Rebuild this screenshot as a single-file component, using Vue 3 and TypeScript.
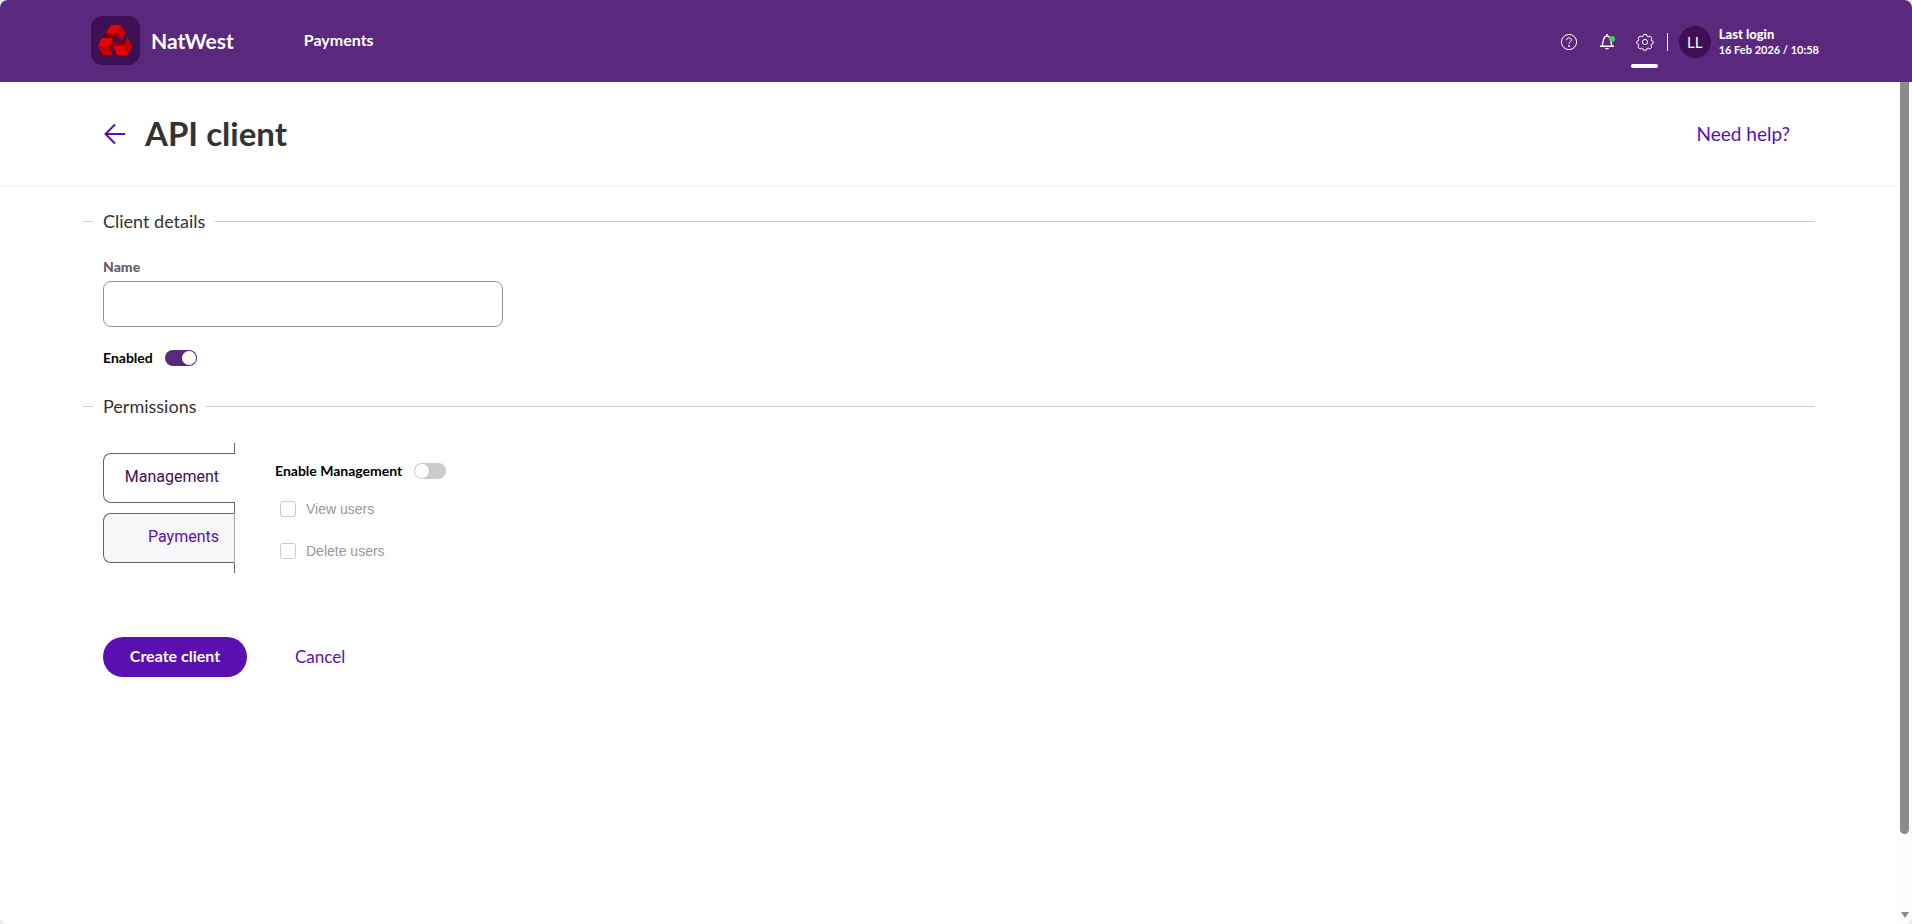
<script setup lang="ts">
import { ref } from 'vue'

interface Permission {
  id: string
  label: string
  checked: boolean
}

const name = ref('')
const enabled = ref(true)
const managementEnabled = ref(false)
const tabs = ['Management', 'Payments']
const activeTab = ref('Management')
const permissions = ref<Permission[]>([
  { id: 'view-users', label: 'View users', checked: false },
  { id: 'delete-users', label: 'Delete users', checked: false },
])
</script>

<template>
  <div class="page">
    <header class="topbar">
      <a class="brand" href="#">
        <svg class="brand-mark" viewBox="0 0 49 49" aria-hidden="true">
          <rect width="49" height="49" rx="12" fill="#3c1053" />
          <path fill="#990000" d="M15 17h11l2 4H17z" />
          <path fill="#ed0000" d="M20 9h10l-4 8H15z" />
          <path fill="#c40000" d="M30 9l5 8-4.500 8.500L26 17z" />
          <path fill="#990000" d="M21.500 22l2.300 4-4.300 7.500-2-3.500z" />
          <path fill="#ed0000" d="M11 22h10.500l-4 8H7z" />
          <path fill="#c40000" d="M7 30h10.500l4.500 9H11.500z" />
          <path fill="#990000" d="M36.500 22l-4 8H22l2-3.500h9.500z" />
          <path fill="#c40000" d="M36.500 22l5 8-5 9-4-9z" />
          <path fill="#ed0000" d="M22 30h10.500l4 9h-10z" />
        </svg>
        <span>NatWest</span>
      </a>
      <nav class="nav"><a href="#">Payments</a></nav>
      <div class="tools">
        <button class="tool" type="button" aria-label="Help">
          <svg viewBox="0 0 18 18" aria-hidden="true">
            <circle cx="9" cy="9" r="7.600" />
            <path d="M6.600 7.200C6.600 5.600 7.600 4.800 9 4.800s2.500.9 2.500 2.200c0 1.800-2.500 1.900-2.500 3.800" />
            <circle class="solid" cx="9" cy="13" r=".9" />
          </svg>
        </button>
        <button class="tool" type="button" aria-label="Notifications">
          <svg viewBox="0 0 18 18" aria-hidden="true">
            <path class="bold" d="M9 1v2M2 13.300h14M4 13C5.400 11 4.200 3 9 3s3.600 8 5 10" />
            <path class="solid" d="M7 15h4c-.3 1.900-3.700 1.900-4 0z" />
            <circle class="dot" cx="14" cy="6" r="3" />
          </svg>
        </button>
        <button class="tool current" type="button" aria-label="Settings">
          <svg viewBox="0 0 18 18" aria-hidden="true">
            <circle cx="9" cy="9" r="2.600" />
            <path d="M7.500 1.500h3l.6 1.900 1.200.5 1.800-.9L16 5.100l-.8 1.700.4 1 1.500.4v2.300l-1.600.6-.5 1.200.9 1.700-2 2-1.700-.9-1.200.5-.6 1.600h-3l-.6-1.600-1.100-.5-1.800.9-2-2 .9-1.700-.5-1.200-1.400-.6V8.200l1.500-.4.4-1L2.100 5.100 4 3l1.800.9 1.100-.5z" />
          </svg>
        </button>
        <span class="divider"></span>
        <span class="avatar">LL</span>
        <p class="login"><strong>Last login</strong><span>16 Feb 2026 / 10:58</span></p>
      </div>
    </header>

    <div class="viewport">
      <main class="content">
        <div class="heading">
          <a class="back" href="#" aria-label="Back">
            <svg viewBox="0 0 22 22" aria-hidden="true"><path d="M21 11H2M11 1.500L1.500 11l9.500 9.500" /></svg>
          </a>
          <h1>API client</h1>
          <a class="help" href="#">Need help?</a>
        </div>

        <form @submit.prevent>
          <fieldset class="details">
            <legend>Client details</legend>
            <label class="name-label" for="client-name">Name</label>
            <input id="client-name" v-model="name" class="name-input" type="text" />
            <div class="switch-row">
              <label for="enabled">Enabled</label>
              <input id="enabled" v-model="enabled" class="switch" type="checkbox" role="switch" />
            </div>
          </fieldset>

          <fieldset class="permissions">
            <legend>Permissions</legend>
            <div class="panels">
              <div class="tabs" role="tablist">
                <button
                  v-for="tab in tabs"
                  :key="tab"
                  class="tab"
                  :class="{ active: tab === activeTab }"
                  type="button"
                  role="tab"
                  :aria-selected="tab === activeTab"
                  @click="activeTab = tab"
                >{{ tab }}</button>
              </div>
              <div class="panel" role="tabpanel">
                <div class="switch-row">
                  <label for="management">Enable Management</label>
                  <input id="management" v-model="managementEnabled" class="switch" type="checkbox" role="switch" />
                </div>
                <div v-for="item in permissions" :key="item.id" class="check-row">
                  <input :id="item.id" v-model="item.checked" type="checkbox" :disabled="!managementEnabled" />
                  <label :for="item.id">{{ item.label }}</label>
                </div>
              </div>
            </div>
          </fieldset>

          <div class="actions">
            <button class="primary" type="submit">Create client</button>
            <a class="cancel" href="#">Cancel</a>
          </div>
        </form>
      </main>
      <div class="rail" aria-hidden="true">
        <span class="thumb"></span>
        <svg viewBox="0 0 8 6"><path d="M0 0h8L4 6z" /></svg>
      </div>
    </div>
  </div>
</template>

<style>
body {
  margin: 0;
  background: #ececec;
}
</style>

<style scoped>
.page {
  display: flex;
  flex-direction: column;
  min-height: 100vh;
  overflow: hidden;
  border-radius: 8px;
  background: #fff;
  color: #333;
  font-family: Lato, "Liberation Sans", sans-serif;
  font-size: 16px;
}
.page *,
.page *::before {
  box-sizing: border-box;
}
a {
  color: #5a10b0;
  text-decoration: none;
}
button {
  border: 0;
  background: none;
  cursor: pointer;
}
.topbar {
  display: flex;
  align-items: center;
  height: 82px;
  padding: 0 93px 1px 91px;
  background: #5a287d;
  color: #fff;
}
.topbar a {
  color: #fff;
}
.brand {
  display: flex;
  align-items: center;
  gap: 11px;
  font-size: 21px;
  font-weight: 700;
}
.brand-mark {
  width: 49px;
  height: 49px;
}
.nav {
  margin-left: 70px;
  padding-bottom: 2px;
  font-weight: 700;
}
.tools {
  display: flex;
  align-items: center;
  margin-left: auto;
  padding-top: 3px;
}
.tool {
  position: relative;
  display: flex;
  align-items: center;
  justify-content: center;
  width: 28px;
  height: 52px;
  margin-right: 10px;
  padding: 0;
}
.tool.current {
  margin-right: 8px;
}
.tool.current::after {
  content: "";
  position: absolute;
  bottom: 0;
  left: 0;
  width: 27px;
  height: 4px;
  border-radius: 2px;
  background: #fff;
}
.tool svg {
  width: 18px;
  height: 18px;
  fill: none;
  stroke: #fff;
  stroke-width: 1;
}
.tool .bold {
  stroke-width: 1.500;
}
.tool .solid {
  fill: #fff;
  stroke: none;
}
.tool .dot {
  fill: #3bd44f;
  stroke: none;
}
.divider {
  width: 1px;
  height: 18px;
  background: #fff;
}
.avatar {
  display: flex;
  align-items: center;
  justify-content: center;
  width: 32px;
  height: 32px;
  margin: 0 8px 0 11px;
  border-radius: 50%;
  background: #3c1053;
  font-size: 15px;
}
.login {
  display: flex;
  flex-direction: column;
  margin: 0;
  font-size: 11px;
  font-weight: 700;
  line-height: 15px;
}
.login strong {
  font-size: 13px;
}
.viewport {
  display: flex;
  flex: 1;
}
.content {
  flex: 1;
}
.heading {
  display: flex;
  align-items: center;
  height: 105px;
  padding: 0 107px 0 104px;
  border-bottom: 1px solid #f2f2f2;
}
.back {
  display: flex;
  margin-right: 19px;
}
.back svg {
  width: 22px;
  height: 22px;
  fill: none;
  stroke: #5a10b0;
  stroke-width: 2;
}
h1 {
  margin: 0;
  padding-bottom: 2px;
  font-size: 33px;
  line-height: 40px;
}
.help {
  margin-left: auto;
  padding-bottom: 2px;
  font-size: 19px;
}
fieldset {
  min-width: 0;
  margin: 0 82px 0 83px;
  padding: 0 20px;
  border: 0;
  border-top: 1px solid #ccc;
}
legend {
  margin-left: -10px;
  padding: 0 10px;
  font-size: 18px;
  line-height: 25px;
}
.details {
  margin-top: 22px;
}
.name-label {
  display: block;
  margin-top: 23px;
  color: #646068;
  font-size: 14px;
  font-weight: 900;
  line-height: 20px;
}
.name-input {
  display: block;
  width: 400px;
  height: 46px;
  margin-top: 4px;
  padding: 0 12px;
  border: 1px solid #949494;
  border-radius: 8px;
  background: #fff;
  font: inherit;
}
.switch-row {
  display: flex;
  align-items: center;
  gap: 12px;
  height: 20px;
  color: #000;
  font-size: 14px;
  font-weight: 700;
}
.switch-row label {
  padding-bottom: 2px;
}
.details .switch-row {
  margin-top: 21px;
}
.switch {
  display: flex;
  align-items: center;
  width: 32px;
  height: 16px;
  margin: 0;
  padding: 0 1px;
  border-radius: 8px;
  background: #ccc;
  appearance: none;
}
.switch::before {
  content: "";
  width: 14px;
  height: 14px;
  border-radius: 50%;
  background: #fff;
}
.switch:checked {
  justify-content: flex-end;
  background: #5a287d;
}
.permissions {
  margin-top: 26px;
}
.panels {
  display: flex;
  gap: 40px;
  margin-top: 24px;
}
.tabs {
  display: flex;
  flex-direction: column;
  width: 132px;
}
.tabs::before,
.tabs::after {
  content: "";
  height: 10px;
  border-right: 1px solid #63616a;
}
.tab {
  height: 50px;
  padding: 0 15px 4px;
  border: 1px solid #63616a;
  border-right-color: #a8a8ac;
  border-radius: 8px 0 0 8px;
  background: #f7f7fa;
  color: #5a10b0;
  font: 16px Roboto, sans-serif;
  text-align: right;
}
.tab.active {
  border-right: 0;
  padding-right: 16px;
  background: #fff;
  color: #3c1053;
}
.tab + .tab {
  position: relative;
  margin-top: 10px;
}
.tab + .tab::before {
  content: "";
  position: absolute;
  top: -11px;
  right: -1px;
  width: 1px;
  height: 10px;
  background: #63616a;
}
.panel {
  padding-top: 18px;
}
.check-row {
  display: flex;
  align-items: center;
  gap: 10px;
  height: 16px;
  margin: 20px 0 26px 5px;
  color: #999;
  font: 14px "Liberation Sans", sans-serif;
}
.check-row input {
  width: 16px;
  height: 16px;
  margin: 0;
  border: 1px solid #ccc;
  border-radius: 3px;
  background: #fff;
  appearance: none;
}
.check-row input:checked {
  background: #5a287d;
}
.check-row + .check-row {
  margin: 0 0 0 5px;
}
.actions {
  display: flex;
  align-items: center;
  margin: 64px 103px 0;
  gap: 48px;
}
.primary {
  min-width: 144px;
  height: 40px;
  padding: 0 24px 3px;
  border-radius: 20px;
  background: #5a10b0;
  color: #fff;
  font: 700 16px Lato, sans-serif;
}
.cancel {
  padding-bottom: 2px;
  font-size: 17px;
}
.rail {
  display: flex;
  flex-direction: column;
  align-items: center;
  justify-content: space-between;
  width: 15px;
  padding-bottom: 6px;
  background: #fcfcfc;
}
.thumb {
  width: 9px;
  height: 90%;
  border-radius: 0 0 5px 5px;
  background: #8b8b8b;
}
.rail svg {
  width: 8px;
  height: 6px;
  fill: #8b8b8b;
}
</style>
